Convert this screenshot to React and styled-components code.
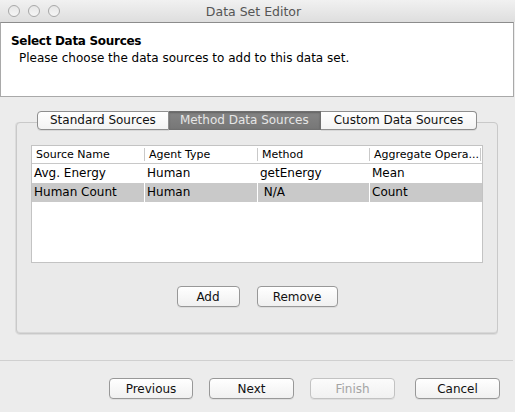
import React from "react";
import styled, { createGlobalStyle } from "styled-components";

const GlobalStyle = createGlobalStyle`
  *, *::before, *::after {
    box-sizing: border-box;
  }
  html, body {
    margin: 0;
    padding: 0;
    background: #ececec;
  }
  body {
    font-family: "DejaVu Sans", "Liberation Sans", sans-serif;
    font-size: 12px;
    color: #000;
  }
`;

const columns = ["Source Name", "Agent Type", "Method", "Aggregate Opera..."];

const rows = [
  { name: "Avg. Energy", agent: "Human", method: "getEnergy", op: "Mean" },
  { name: "Human Count", agent: "Human", method: " N/A", op: "Count", selected: true },
];

function App() {
  return (
    <Window>
      <GlobalStyle />
      <TitleBar>
        <Lights>
          <Light />
          <Light />
          <Light />
        </Lights>
        <Title>Data Set Editor</Title>
      </TitleBar>

      <Header>
        <h1>Select Data Sources</h1>
        <p>Please choose the data sources to add to this data set.</p>
      </Header>

      <Body>
        <Tabs>
          <Tab first>Standard Sources</Tab>
          <Tab active>Method Data Sources</Tab>
          <Tab last>Custom Data Sources</Tab>
        </Tabs>
        <Panel>
          <Table>
            <HeadRow>
              {columns.map((c) => (
                <HeadCell key={c}>{c}</HeadCell>
              ))}
            </HeadRow>
            {rows.map((r) => (
              <Row key={r.name} selected={r.selected}>
                <Cell>{r.name}</Cell>
                <Cell>{r.agent}</Cell>
                <Cell>{r.method}</Cell>
                <Cell>{r.op}</Cell>
              </Row>
            ))}
          </Table>
          <PanelButtons>
            <Button width={63}>Add</Button>
            <Button width={81}>Remove</Button>
          </PanelButtons>
        </Panel>
      </Body>

      <Footer>
        <Button width={84}>Previous</Button>
        <Button width={85}>Next</Button>
        <Button width={85} disabled>Finish</Button>
        <Button width={85} gap={20}>Cancel</Button>
      </Footer>
    </Window>
  );
}

const Window = styled.div`
  width: 515px;
  height: 412px;
  background: #ececec;
  display: flex;
  flex-direction: column;
  overflow: hidden;
`;

const TitleBar = styled.div`
  height: 22px;
  flex-shrink: 0;
  background: linear-gradient(#f1f1f1, #dedede);
  display: flex;
  align-items: center;
`;

const Lights = styled.div`
  display: flex;
  gap: 8px;
  padding-left: 8px;
`;

const Light = styled.span`
  width: 12px;
  height: 12px;
  border-radius: 50%;
  border: 1px solid #a8a8a8;
  background: linear-gradient(#e6e6e6, #f6f6f6);
`;

const Title = styled.div`
  flex: 1;
  text-align: center;
  margin-left: -68px;
  font-size: 12.5px;
  color: #555;
`;

const Header = styled.div`
  height: 75px;
  flex-shrink: 0;
  width: 514px;
  background: #fff;
  border: 1px solid #a9a9a9;
  border-top-color: #8c8c8c;

  h1 {
    margin: 11px 0 0 10px;
    font-size: 12px;
    font-weight: bold;
    letter-spacing: -0.3px;
  }

  p {
    margin: 3px 0 0 18px;
    font-size: 12px;
  }
`;

const Body = styled.div`
  padding: 14px 16px 0 16px;
  display: flex;
  flex-direction: column;
`;

const Tabs = styled.div`
  display: flex;
  margin-left: 21px;
  position: relative;
  z-index: 1;
`;

const Tab = styled.div`
  height: 19px;
  line-height: 17px;
  padding: 0 ${(p) => (p.first ? 12 : p.last ? 13 : 11)}px;
  font-size: 12px;
  border: 1px solid ${(p) => (p.active ? "#6f6f6f" : "#8e8e8e")};
  border-left-width: ${(p) => (p.first ? 1 : 0)}px;
  border-radius: ${(p) =>
    p.first ? "4px 0 0 4px" : p.last ? "0 4px 4px 0" : "0"};
  background: ${(p) =>
    p.active ? "linear-gradient(#848484, #777)" : "linear-gradient(#fff, #f3f3f3)"};
  color: ${(p) => (p.active ? "#e6e6e6" : "#111")};
  box-shadow: ${(p) => (p.active ? "inset 0 1px 2px rgba(0,0,0,0.25)" : "0 1px 0 rgba(0,0,0,0.08)")};
`;

const Panel = styled.div`
  margin-top: -8px;
  height: 212px;
  width: 482px;
  border: 1px solid #c9c9c9;
  border-radius: 4px;
  box-shadow: inset 0 -1px 0 #d8d8d8, -1px 0 0 #dcdcdc, 0 1px 0 #dcdcdc;
  background: #eaeaea;
  padding: 22px 14px 0 14px;
  display: flex;
  flex-direction: column;
`;

const Table = styled.div`
  height: 118px;
  background: #fff;
  border: 1px solid #c3c3c3;
  display: flex;
  flex-direction: column;
`;

const HeadRow = styled.div`
  display: grid;
  grid-template-columns: 113px 113px 112px 1fr;
  height: 18px;
  border-bottom: 1px solid #c8c8c8;
`;

const HeadCell = styled.div`
  font-size: 11px;
  line-height: 17px;
  padding-left: 4px;
  background: linear-gradient(#c9c9c9, #c9c9c9) right 2px / 1px 13px no-repeat;
  white-space: nowrap;
  overflow: hidden;

  &:last-child {
    margin-right: 1px;
  }
`;

const Row = styled.div`
  display: grid;
  grid-template-columns: 113px 113px 112px 1fr;
  height: 19px;
  background: ${(p) => (p.selected ? "#c9c9c9" : "#fff")};
`;

const Cell = styled.div`
  font-size: 12px;
  line-height: 19px;
  padding-left: 2px;
  white-space: pre;
  border-right: 1px solid #fff;

  &:last-child {
    border-right: none;
  }
`;

const PanelButtons = styled.div`
  display: flex;
  justify-content: center;
  gap: 17px;
  margin-top: 23px;
`;

const Button = styled.button`
  width: ${(p) => p.width}px;
  height: 21px;
  margin-left: ${(p) => (p.gap ? p.gap - 16 : 0)}px;
  font-family: "DejaVu Sans", "Liberation Sans", sans-serif;
  font-size: 12px;
  color: ${(p) => (p.disabled ? "#a4a4a4" : "#111")};
  border: 1px solid ${(p) => (p.disabled ? "#c2c2c2" : "#989898")};
  border-radius: 4px;
  background: ${(p) =>
    p.disabled ? "linear-gradient(#fbfbfb, #f1f1f1)" : "linear-gradient(#fff, #f0f0f0)"};
  box-shadow: 0 1px 0 rgba(0, 0, 0, 0.06);
  padding: 0;
`;

const Footer = styled.div`
  margin-top: 26px;
  border-top: 1px solid #d0d0d0;
  width: 513px;
  display: flex;
  justify-content: flex-end;
  gap: 16px;
  padding: 17px 13px 0 0;
`;

export default App;
